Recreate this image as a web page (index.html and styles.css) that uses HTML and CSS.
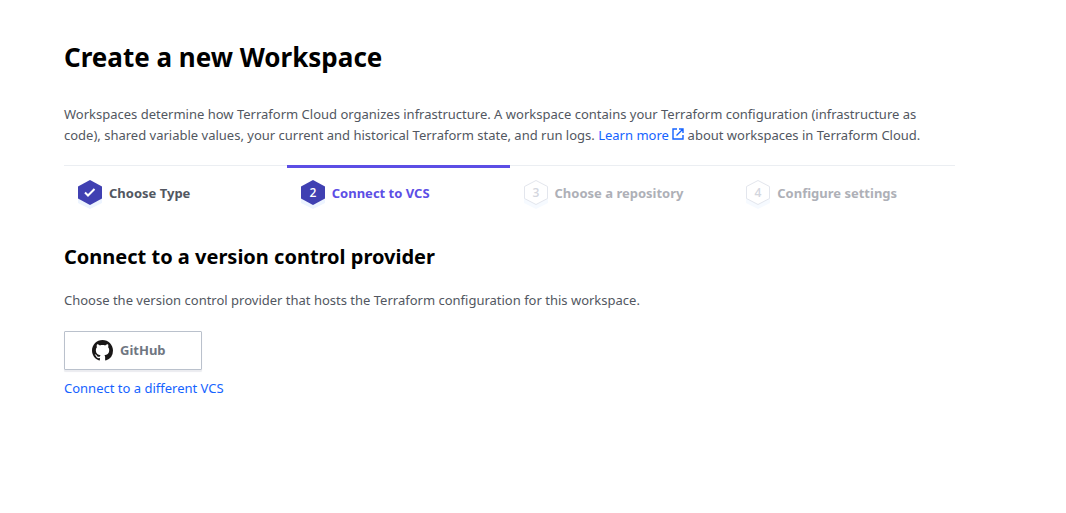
FILE: index.html
```html
<!DOCTYPE html>
<html lang="en">
<head>
<meta charset="utf-8">
<meta name="viewport" content="width=device-width, initial-scale=1">
<title>Create a new Workspace</title>
<link rel="stylesheet" href="styles.css">
</head>
<body>
<main class="page">
  <h1 class="title">Create a new Workspace</h1>
  <p class="text">Workspaces determine how Terraform Cloud organizes infrastructure. A workspace contains your Terraform configuration (infrastructure as code), shared variable values, your current and historical Terraform state, and run logs. <a class="link" href="#">Learn more <svg class="external" viewBox="0 0 12 12" aria-hidden="true"><path d="M5 1H1v10h10V7M7 1h4v4M11 1 4.500 7.500"/></svg></a> about workspaces in Terraform Cloud.</p>

  <ol class="steps">
    <li class="step step-done">
      <svg class="badge" viewBox="0 0 26 32" aria-hidden="true"><path class="shadow" d="M13 4 25 10v14l-12 6-12-6V10z"/><path class="hex" d="M13 1 25 7.500v12L13 26 1 19.500v-12z"/><path class="check" d="m8 13.500 3 3 6.500-6.500"/></svg>
      <span>Choose Type</span>
    </li>
    <li class="step step-current" aria-current="step">
      <svg class="badge" viewBox="0 0 26 32" aria-hidden="true"><path class="shadow" d="M13 4 25 10v14l-12 6-12-6V10z"/><path class="hex" d="M13 1 25 7.500v12L13 26 1 19.500v-12z"/><text class="num" x="13" y="18">2</text></svg>
      <span>Connect to VCS</span>
    </li>
    <li class="step step-next">
      <svg class="badge" viewBox="0 0 26 32" aria-hidden="true"><path class="shadow" d="M13 4 25 10v14l-12 6-12-6V10z"/><path class="hex" d="M13 1.500 24.500 7.500v12L13 25.500 1.500 19.500v-12z"/><text class="num" x="13" y="18">3</text></svg>
      <span>Choose a repository</span>
    </li>
    <li class="step step-next">
      <svg class="badge" viewBox="0 0 26 32" aria-hidden="true"><path class="shadow" d="M13 4 25 10v14l-12 6-12-6V10z"/><path class="hex" d="M13 1.500 24.500 7.500v12L13 25.500 1.500 19.500v-12z"/><text class="num" x="13" y="18">4</text></svg>
      <span>Configure settings</span>
    </li>
  </ol>

  <h2 class="subtitle">Connect to a version control provider</h2>
  <p class="text">Choose the version control provider that hosts the Terraform configuration for this workspace.</p>
  <div class="actions">
    <button class="provider" type="button">
      <svg class="github" viewBox="0 0 16 16" aria-hidden="true"><path d="M8 0C3.580 0 0 3.580 0 8c0 3.540 2.290 6.530 5.470 7.590.4.070.55-.17.55-.38 0-.19-.01-.82-.01-1.490-2.010.37-2.530-.49-2.690-.94-.09-.23-.48-.94-.82-1.130-.28-.15-.68-.52-.01-.53.63-.01 1.080.58 1.230.82.72 1.210 1.870.87 2.330.66.07-.52.28-.87.51-1.070-1.780-.2-3.640-.89-3.640-3.950 0-.87.31-1.590.82-2.150-.08-.2-.36-1.020.08-2.120 0 0 .67-.21 2.200.82.64-.18 1.320-.27 2-.27s1.360.09 2 .27c1.530-1.040 2.200-.82 2.200-.82.44 1.100.16 1.920.08 2.120.51.56.82 1.270.82 2.150 0 3.070-1.870 3.750-3.650 3.950.29.25.54.73.54 1.480 0 1.070-.01 1.930-.01 2.200 0 .21.15.46.55.38A8.010 8.010 0 0 0 16 8c0-4.420-3.580-8-8-8z"/></svg>
      GitHub
    </button>
    <a class="link" href="#">Connect to a different VCS</a>
  </div>
</main>
</body>
</html>
```
FILE: styles.css
```css
* {
  box-sizing: border-box;
}

body {
  margin: 0;
  background: #fff;
  color: #525761;
  font: 13px/21px "Noto Sans", "Segoe UI", sans-serif;
}

.page {
  max-width: 1019px;
  padding: 40px 64px;
}

.title,
.subtitle {
  margin: 0;
  color: #000;
  font-weight: 700;
}

.title {
  margin-bottom: 29px;
  font-size: 26px;
  line-height: 35px;
}

.subtitle {
  margin-bottom: 19px;
  font-size: 20px;
  line-height: 28px;
}

.text {
  margin: 0 0 19px;
}

.link {
  color: #1563ff;
  text-decoration: none;
}

.external {
  width: 12px;
  height: 12px;
  fill: none;
  stroke: currentColor;
  stroke-width: 1.4;
}

.steps {
  display: grid;
  grid-template-columns: repeat(4, 1fr);
  margin: 0 0 32px;
  padding: 0;
  border-top: 1px solid #ebeef2;
  list-style: none;
}

.step {
  display: flex;
  align-items: flex-start;
  gap: 6px;
  margin-top: -1px;
  padding: 11px 13px 0;
  border-top: 3px solid transparent;
  color: #525761;
  font-weight: 700;
  line-height: 28px;
}

.badge {
  flex: none;
  width: 26px;
  height: 32px;
}

.shadow {
  fill: #edf4ff;
}

.hex {
  fill: #4040b2;
}

.check {
  fill: none;
  stroke: #fff;
  stroke-width: 2;
}

.num {
  fill: #fff;
  font: 600 12px "Open Sans", sans-serif;
  text-anchor: middle;
}

.step-current {
  border-top-color: #5c4ee5;
  color: #5c4ee5;
}

.step-next {
  color: #aeb0b7;
}

.step-next .shadow {
  fill: #f6faff;
}

.step-next .hex {
  fill: #fff;
  stroke: #e3e6ed;
}

.step-next .num {
  fill: #d3d6de;
}

.actions {
  display: flex;
  flex-direction: column;
  align-items: flex-start;
  gap: 8px;
  padding-top: 1px;
}

.provider {
  display: flex;
  align-items: center;
  gap: 7px;
  padding: 8px 35px 8px 27px;
  border: 1px solid #bac1cc;
  border-radius: 1px;
  background: #fff;
  box-shadow: 0 2px 1px #ebecf0;
  color: #6f7682;
  font: inherit;
  font-weight: 700;
}

.github {
  width: 21px;
  height: 21px;
  fill: #191717;
}
```
